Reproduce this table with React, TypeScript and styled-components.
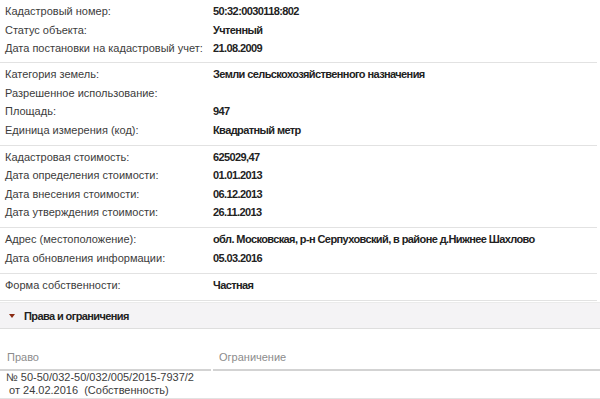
import React from 'react';
import styled, { createGlobalStyle } from 'styled-components';

const GlobalStyle = createGlobalStyle`
  body {
    margin: 0;
    background: #fff;
    font-family: Arial, "Liberation Sans", sans-serif;
    font-size: 11px;
    color: #333;
  }
`;

const Page = styled.div`
  width: 600px;
`;

const Section = styled.div`
  padding: 2px 0 6px;
  border-bottom: 1px solid #e2e2e2;
  margin-right: 3px;

  &:first-child {
    padding-bottom: 5px;
  }
`;

const Row = styled.div`
  display: grid;
  grid-template-columns: 213px 1fr;
  height: 18.4px;
  align-items: center;
`;

const Label = styled.div`
  padding-left: 5px;
  color: #3c3c3c;
`;

const Value = styled.div`
  font-weight: bold;
  letter-spacing: -0.6px;
  color: #222;
`;

const Bar = styled.div`
  display: flex;
  align-items: center;
  gap: 9px;
  height: 25px;
  margin-top: 1px;
  padding-left: 9px;
  background: #f4f3f5;
  border-top: 1px solid #ebebeb;
  border-bottom: 1px solid #dedede;
  font-weight: bold;
  letter-spacing: -0.6px;
  color: #222;
`;

const Caret = styled.span`
  width: 0;
  height: 0;
  border-left: 3px solid transparent;
  border-right: 3px solid transparent;
  border-top: 4px solid #8a2a12;
`;

const Table = styled.div`
  margin-top: 22px;
`;

const HeadRow = styled.div`
  display: grid;
  grid-template-columns: 211px 1fr;
  column-gap: 2px;
`;

const HeadCell = styled.div`
  padding: 0 0 5px 7px;
  color: #8c8c8c;
  border-bottom: 2px solid #d3d3d3;
  line-height: 13px;
  & + & {
    padding-left: 6px;
  }
`;

const BodyRow = styled.div`
  display: grid;
  grid-template-columns: 213px 1fr;
  border-bottom: 1px solid #e2e2e2;
  padding: 0 0 1px;
`;

const BodyCell = styled.div`
  padding-left: 6px;
  line-height: 13px;
  color: #3c3c3c;
  white-space: pre;
`;

type Field = [string, string];

const sections: Field[][] = [
  [
    ['Кадастровый номер:', '50:32:0030118:802'],
    ['Статус объекта:', 'Учтенный'],
    ['Дата постановки на кадастровый учет:', '21.08.2009'],
  ],
  [
    ['Категория земель:', 'Земли сельскохозяйственного назначения'],
    ['Разрешенное использование:', ''],
    ['Площадь:', '947'],
    ['Единица измерения (код):', 'Квадратный метр'],
  ],
  [
    ['Кадастровая стоимость:', '625029,47'],
    ['Дата определения стоимости:', '01.01.2013'],
    ['Дата внесения стоимости:', '06.12.2013'],
    ['Дата утверждения стоимости:', '26.11.2013'],
  ],
  [
    ['Адрес (местоположение):', 'обл. Московская, р-н Серпуховский, в районе д.Нижнее Шахлово'],
    ['Дата обновления информации:', '05.03.2016'],
  ],
  [['Форма собственности:', 'Частная']],
];

const App = () => {
  return (
    <Page>
      <GlobalStyle />
      {sections.map((fields, i) => (
        <Section key={i}>
          {fields.map(([label, value]) => (
            <Row key={label}>
              <Label>{label}</Label>
              <Value>{value}</Value>
            </Row>
          ))}
        </Section>
      ))}
      <Bar>
        <Caret />
        Права и ограничения
      </Bar>
      <Table>
        <HeadRow>
          <HeadCell>Право</HeadCell>
          <HeadCell>Ограничение</HeadCell>
        </HeadRow>
        <BodyRow>
          <BodyCell>{'№ 50-50/032-50/032/005/2015-7937/2\n от 24.02.2016  (Собственность)'}</BodyCell>
          <BodyCell />
        </BodyRow>
      </Table>
    </Page>
  );
};

export default App;
